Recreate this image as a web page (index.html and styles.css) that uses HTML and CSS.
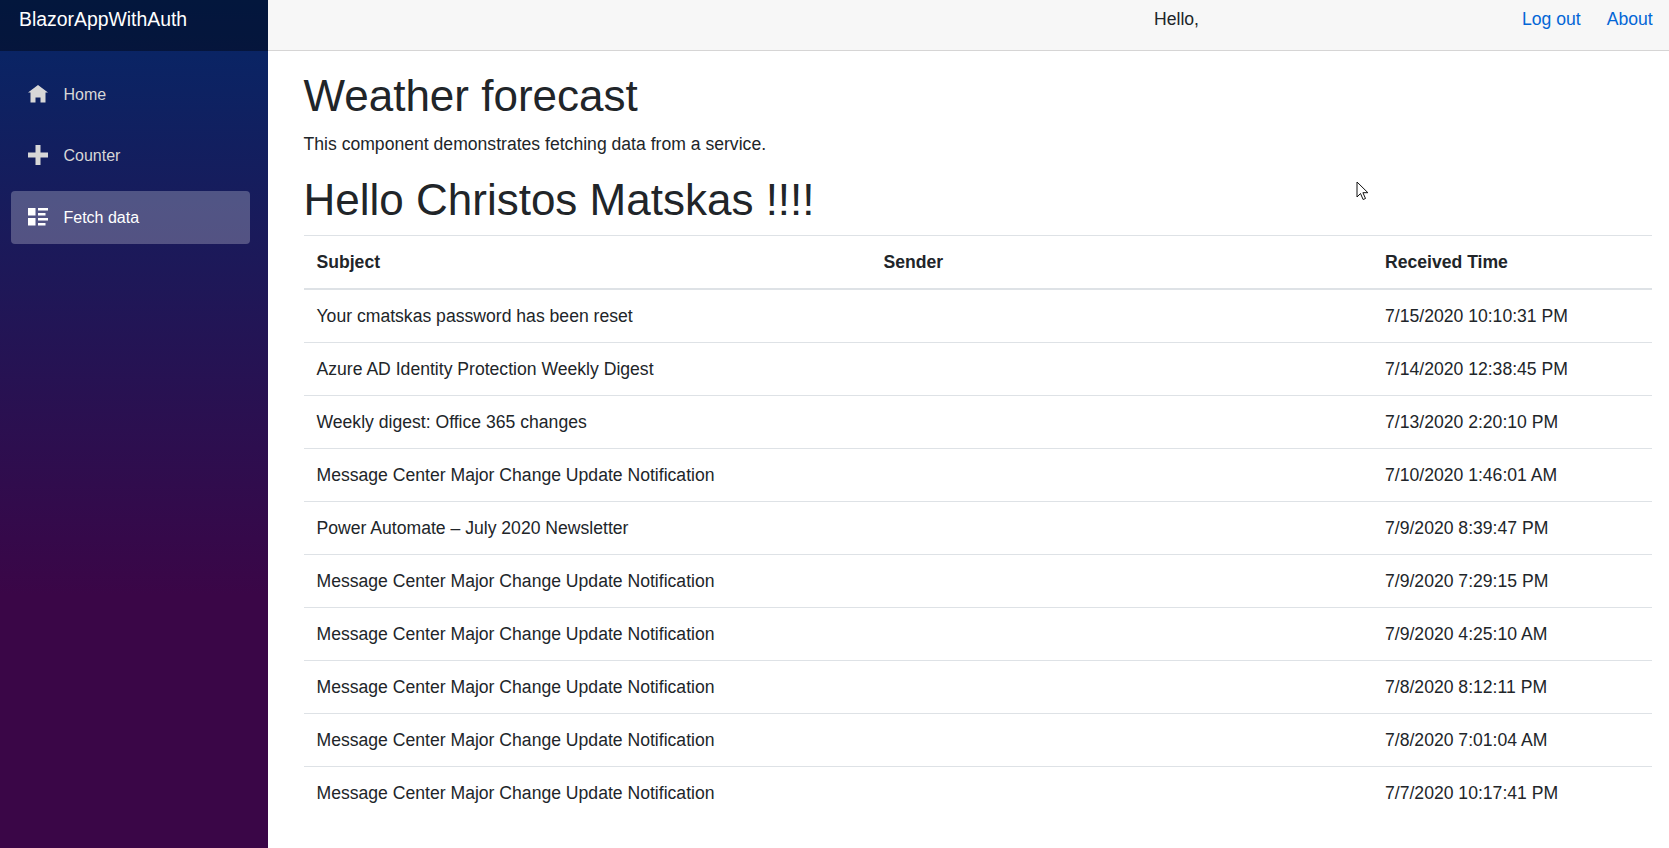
FILE: index.html
```html
<!DOCTYPE html>
<html lang="en">
<head>
    <meta charset="UTF-8">
    <meta name="viewport" content="width=device-width, initial-scale=1.0">
    <title>BlazorAppWithAuth</title>
    <link rel="stylesheet" href="styles.css">
</head>
<body>

<div class="page">
    <div class="sidebar">
        <div class="brand-row">
            <a class="brand">BlazorAppWithAuth</a>
        </div>
        <ul class="nav">
            <li class="nav-item">
                <svg class="nav-icon" viewBox="0 0 8 8"><path d="M4 0l-4 3h1v4h2v-2h2v2h2v-4.03l1 .03-4-3z"/></svg>
                Home
            </li>
            <li class="nav-item">
                <svg class="nav-icon plus-icon" viewBox="0 0 8 8"><path d="M3 0v3h-3v2h3v3h2v-3h3v-2h-3v-3h-2z"/></svg>
                Counter
            </li>
            <li class="nav-item active">
                <svg class="nav-icon" viewBox="0 0 8 8"><path d="M0 0v3h3v-3h-3zm4 0v1h4v-1h-4zm0 2v1h3v-1h-3zm-4 2v3h3v-3h-3zm4 0v1h4v-1h-4zm0 2v1h3v-1h-3z"/></svg>
                Fetch data
            </li>
        </ul>
    </div>

    <div class="main">
        <div class="top-row">
            <span class="hello">Hello,</span>
            <a class="top-link">Log out</a>
            <a class="top-link">About</a>
        </div>

        <div class="content">
            <h1 class="title">Weather forecast</h1>
            <p class="intro">This component demonstrates fetching data from a service.</p>
            <h1 class="greeting">Hello Christos Matskas !!!!</h1>

            <table class="mail-table">
                <thead>
                    <tr>
                        <th class="col-subject">Subject</th>
                        <th class="col-sender">Sender</th>
                        <th>Received Time</th>
                    </tr>
                </thead>
                <tbody>
                    <tr><td>Your cmatskas password has been reset</td><td></td><td>7/15/2020 10:10:31 PM</td></tr>
                    <tr><td>Azure AD Identity Protection Weekly Digest</td><td></td><td>7/14/2020 12:38:45 PM</td></tr>
                    <tr><td>Weekly digest: Office 365 changes</td><td></td><td>7/13/2020 2:20:10 PM</td></tr>
                    <tr><td>Message Center Major Change Update Notification</td><td></td><td>7/10/2020 1:46:01 AM</td></tr>
                    <tr><td>Power Automate – July 2020 Newsletter</td><td></td><td>7/9/2020 8:39:47 PM</td></tr>
                    <tr><td>Message Center Major Change Update Notification</td><td></td><td>7/9/2020 7:29:15 PM</td></tr>
                    <tr><td>Message Center Major Change Update Notification</td><td></td><td>7/9/2020 4:25:10 AM</td></tr>
                    <tr><td>Message Center Major Change Update Notification</td><td></td><td>7/8/2020 8:12:11 PM</td></tr>
                    <tr><td>Message Center Major Change Update Notification</td><td></td><td>7/8/2020 7:01:04 AM</td></tr>
                    <tr><td>Message Center Major Change Update Notification</td><td></td><td>7/7/2020 10:17:41 PM</td></tr>
                </tbody>
            </table>
        </div>
    </div>
</div>

<!-- mouse pointer caught in the screenshot -->
<svg class="cursor" viewBox="0 0 13 20"><path d="M1 1v15l3.5-3.5 2.6 6 2.4-1-2.6-5.8h5z"/></svg>

</body>
</html>
```

FILE: styles.css
```css
html, body {
    height: 100%;
}

body {
    margin: 0;
    font-family: "Liberation Sans", Arial, sans-serif;
    font-size: 17.6px;
    line-height: 26px;
    color: #212529;
    background-color: #fff;
    overflow: hidden;
}

.page {
    display: flex;
    height: 100%;
}

.sidebar {
    width: 268px;
    flex-shrink: 0;
    background-image: linear-gradient(180deg, #052767 0%, #3a0647 70%);
}

.brand-row {
    height: 51px;
    background-color: rgba(0, 0, 0, 0.4);
    padding-left: 19px;
    box-sizing: border-box;
}

.brand {
    font-size: 19.4px;
    line-height: 38px;
    color: #fff;
}

.nav {
    list-style: none;
    margin: 0;
    padding: 17px 18px 0 11px;
    display: flex;
    flex-direction: column;
    gap: 8.5px;
}

.nav-item {
    display: flex;
    align-items: center;
    height: 53px;
    padding-left: 17px;
    border-radius: 4px;
    font-size: 16px;
    color: #d7d7d7;
}

.nav-item.active {
    background-color: rgba(255, 255, 255, 0.25);
    color: #fff;
}

.nav-icon {
    width: 20px;
    height: 20px;
    margin-right: 15.5px;
    fill: currentColor;
}

.plus-icon {
    margin-bottom: 3px;
}

.main {
    flex: 1;
    min-width: 0;
}

.top-row {
    display: flex;
    align-items: flex-start;
    height: 51px;
    box-sizing: border-box;
    background-color: #f7f7f7;
    border-bottom: 1px solid #d6d5d5;
    padding-top: 6px;
}

.hello {
    margin-left: 886px;
}

.top-link {
    color: #0366d6;
    margin-left: 26px;
}

.hello + .top-link {
    margin-left: 323px;
}

.content {
    padding: 0 17px 0 35.5px;
}

.title {
    margin: 18.5px 0 9px;
    font-size: 44px;
    font-weight: 500;
    line-height: 1.2;
}

.intro {
    margin: 0 0 17px;
}

.greeting {
    margin: 0 0 8px;
    font-size: 44px;
    font-weight: 500;
    line-height: 1.2;
}

.mail-table {
    width: 100%;
    border-collapse: collapse;
    table-layout: fixed;
}

.mail-table th,
.mail-table td {
    padding: 13px;
    text-align: left;
    border-top: 1px solid #dee2e6;
}

.mail-table thead th {
    border-bottom: 2px solid #dee2e6;
}

.col-subject {
    width: 541px;
}

.col-sender {
    width: 475.5px;
}

.cursor {
    position: absolute;
    left: 1356px;
    top: 181px;
    width: 13px;
    height: 20px;
    fill: #fff;
    stroke: #111;
    stroke-width: 1;
}
```
